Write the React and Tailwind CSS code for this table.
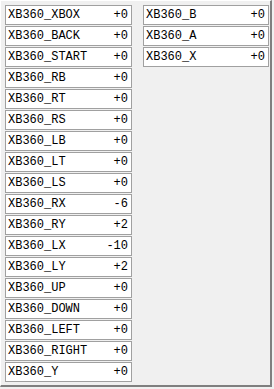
import React from 'react';

const left = [
    ['XB360_XBOX', '+0'],
    ['XB360_BACK', '+0'],
    ['XB360_START', '+0'],
    ['XB360_RB', '+0'],
    ['XB360_RT', '+0'],
    ['XB360_RS', '+0'],
    ['XB360_LB', '+0'],
    ['XB360_LT', '+0'],
    ['XB360_LS', '+0'],
    ['XB360_RX', '-6'],
    ['XB360_RY', '+2'],
    ['XB360_LX', '-10'],
    ['XB360_LY', '+2'],
    ['XB360_UP', '+0'],
    ['XB360_DOWN', '+0'],
    ['XB360_LEFT', '+0'],
    ['XB360_RIGHT', '+0'],
    ['XB360_Y', '+0'],
];

const right = [
    ['XB360_B', '+0'],
    ['XB360_A', '+0'],
    ['XB360_X', '+0'],
];

const Cell = ({ name, value }) => (
    <div className="h-[20px] flex items-center justify-between bg-white border border-[#a0a0a0] pl-[2px] pr-[3px] text-[12px] leading-none text-black">
        <span>{name}</span>
        <span>{value}</span>
    </div>
);

const App = () => {
    return (
        <div className="w-[274px] h-[389px] bg-[#f0f0f0] overflow-hidden" style={{ fontFamily: '"Liberation Mono", "Courier New", monospace' }}>
            <div className="w-[272px] h-[387px] border-t border-l border-t-white border-l-white border-r-2 border-b-2 border-r-[#7f7f7f] border-b-[#7f7f7f] flex gap-[11px] pl-[4px] pt-[4px]">
                <div className="w-[127px] flex flex-col gap-[1px]">
                    {left.map(([n, v]) => (
                        <Cell key={n} name={n} value={v} />
                    ))}
                </div>
                <div className="w-[126px] flex flex-col gap-[1px]">
                    {right.map(([n, v]) => (
                        <Cell key={n} name={n} value={v} />
                    ))}
                </div>
            </div>
        </div>
    );
};

export default App;
